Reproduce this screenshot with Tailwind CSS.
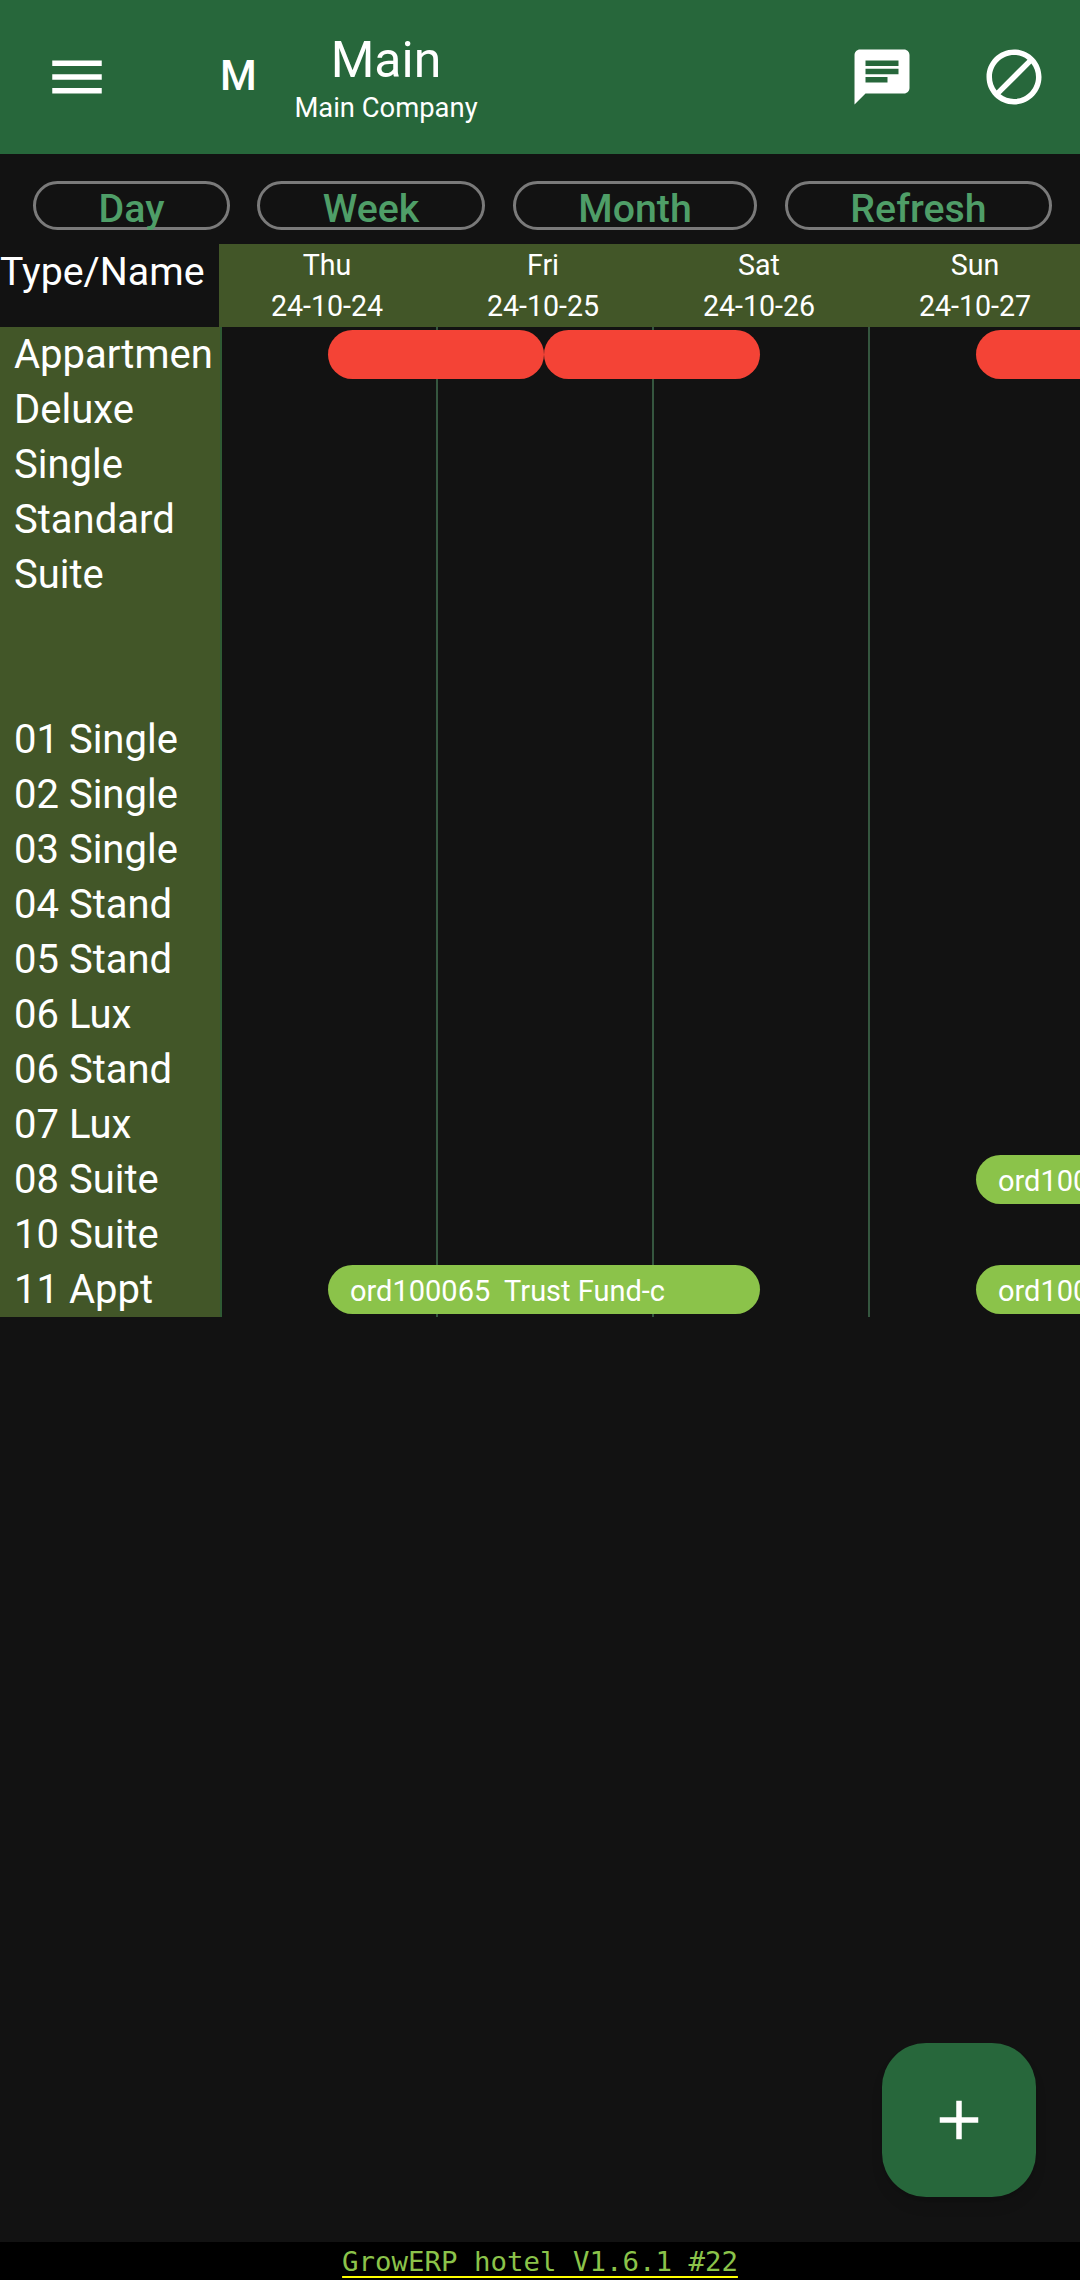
<!DOCTYPE html>
<html lang="en">
<head>
    <meta charset="UTF-8">
    <meta name="viewport" content="width=device-width, initial-scale=1.0">
    <title>GrowERP hotel</title>
    <script src="https://cdn.jsdelivr.net/npm/@tailwindcss/browser@4"></script>
</head>
<body class="bg-[#121212]">
    <div class="w-[1080px] h-[2280px] relative overflow-hidden flex flex-col bg-[#121212] text-white font-['Roboto',sans-serif]">
        <!-- app bar -->
        <header class="h-[154px] shrink-0 bg-[#27673b] flex items-center">
            <svg class="w-[66px] h-[66px] ml-[44px] fill-white" viewBox="0 0 24 24"><path d="M3 18h18v-2H3v2zm0-5h18v-2H3v2zm0-7v2h18V6H3z"/></svg>
            <span class="ml-[110px] w-[41px] text-[42px] font-medium leading-none mt-[-2px]">M</span>
            <div class="ml-[25px] w-[200px] text-center mt-[1px]">
                <div class="text-[50px] leading-[56px]">Main</div>
                <div class="text-[27.4px] leading-[30px] mt-[5px]">Main Company</div>
            </div>
            <svg class="w-[66px] h-[66px] ml-[363px] fill-white" viewBox="0 0 24 24"><path d="M20 2H4c-1.1 0-1.99.9-1.99 2L2 22l4-4h14c1.1 0 2-.9 2-2V4c0-1.1-.9-2-2-2zM6 9h12v2H6V9zm8 5H6v-2h8v2zm4-6H6V6h12v2z"/></svg>
            <svg class="w-[66px] h-[66px] ml-[66px] fill-white" viewBox="0 0 24 24"><path d="M12 2C6.48 2 2 6.48 2 12s4.48 10 10 10 10-4.48 10-10S17.52 2 12 2zM4 12c0-4.42 3.58-8 8-8 1.85 0 3.55.63 4.9 1.69L5.69 16.9C4.63 15.55 4 13.85 4 12zm8 8c-1.85 0-3.55-.63-4.9-1.69L18.31 7.1C19.37 8.45 20 10.15 20 12c0 4.42-3.58 8-8 8z"/></svg>
        </header>

        <!-- period buttons -->
        <div class="flex pt-[27px] pl-[33px] h-[90px] shrink-0 text-[#4f9e68] text-[39.3px] font-medium leading-[50px]">
            <div class="w-[197px] h-[49px] border-[3px] border-[#7a7a7a] rounded-full text-center">Day</div>
            <div class="w-[228px] h-[49px] ml-[27px] border-[3px] border-[#7a7a7a] rounded-full text-center">Week</div>
            <div class="w-[244px] h-[49px] ml-[28px] border-[3px] border-[#7a7a7a] rounded-full text-center">Month</div>
            <div class="w-[267px] h-[49px] ml-[28px] border-[3px] border-[#7a7a7a] rounded-full text-center">Refresh</div>
        </div>

        <!-- date header -->
        <div class="flex h-[83px] shrink-0">
            <div class="w-[219px] shrink-0 text-[39.3px] leading-[56px]">Type/Name</div>
            <div class="flex-1 bg-[#425628] grid grid-cols-[216px_216px_216px_216px] text-[28.6px] leading-[41px] pt-[1px] text-center">
                <div>Thu<br>24-10-24</div>
                <div>Fri<br>24-10-25</div>
                <div>Sat<br>24-10-26</div>
                <div>Sun<br>24-10-27</div>
            </div>
        </div>

        <!-- calendar body -->
        <div class="flex h-[990px] shrink-0">
            <div class="w-[222px] shrink-0 bg-[#425628] border-r-2 border-[#2f5a33] pl-[14px] text-[40px] leading-[55px] overflow-hidden whitespace-nowrap">
                <div class="h-[55px]">Appartmen</div>
                <div class="h-[55px]">Deluxe</div>
                <div class="h-[55px]">Single</div>
                <div class="h-[55px]">Standard</div>
                <div class="h-[55px]">Suite</div>
                <div class="h-[110px]"></div>
                <div class="h-[55px]">01 Single</div>
                <div class="h-[55px]">02 Single</div>
                <div class="h-[55px]">03 Single</div>
                <div class="h-[55px]">04 Stand</div>
                <div class="h-[55px]">05 Stand</div>
                <div class="h-[55px]">06 Lux</div>
                <div class="h-[55px]">06 Stand</div>
                <div class="h-[55px]">07 Lux</div>
                <div class="h-[55px]">08 Suite</div>
                <div class="h-[55px]">10 Suite</div>
                <div class="h-[55px]">11 Appt</div>
            </div>
            <div class="relative flex-1 overflow-hidden">
                <div class="absolute inset-0 flex">
                    <div class="w-[216px] shrink-0 border-r-2 border-[#35563f]"></div>
                    <div class="w-[216px] shrink-0 border-r-2 border-[#35563f]"></div>
                    <div class="w-[216px] shrink-0 border-r-2 border-[#35563f]"></div>
                </div>
                <div class="relative grid grid-cols-[106px_repeat(8,108px)] grid-rows-[repeat(18,55px)] text-[29px] whitespace-nowrap">
                    <div class="col-start-2 col-span-2 row-start-1 my-[3px] rounded-full bg-[#f44336]"></div>
                    <div class="col-start-4 col-span-2 row-start-1 my-[3px] rounded-full bg-[#f44336]"></div>
                    <div class="col-start-8 col-span-2 row-start-1 my-[3px] rounded-l-full bg-[#f44336]"></div>
                    <div class="col-start-8 col-span-2 row-start-16 my-[3px] pl-[22px] leading-[52px] rounded-l-full bg-[#8bc34a] overflow-hidden">ord100066</div>
                    <div class="col-start-2 col-span-4 row-start-18 my-[3px] pl-[22px] leading-[52px] rounded-full bg-[#8bc34a] whitespace-pre">ord100065  Trust Fund-c</div>
                    <div class="col-start-8 col-span-2 row-start-18 my-[3px] pl-[22px] leading-[52px] rounded-l-full bg-[#8bc34a] overflow-hidden">ord100067</div>
                </div>
            </div>
        </div>

        <div class="flex-1"></div>

        <!-- add button -->
        <div class="absolute left-[882px] top-[2043px] w-[154px] h-[154px] rounded-[44px] bg-[#27673b] shadow-lg flex items-center justify-center">
            <svg class="w-[66px] h-[66px] fill-white" viewBox="0 0 24 24"><path d="M19 13h-6v6h-2v-6H5v-2h6V5h2v6h6v2z"/></svg>
        </div>

        <!-- version footer -->
        <footer class="h-[38px] shrink-0 bg-black text-center font-['DejaVu_Sans_Mono',monospace] text-[27.4px] leading-[40px] text-[#8bc34a] underline decoration-[#ffff00] decoration-2 underline-offset-[5px]">GrowERP hotel V1.6.1 #22</footer>
    </div>
</body>
</html>
